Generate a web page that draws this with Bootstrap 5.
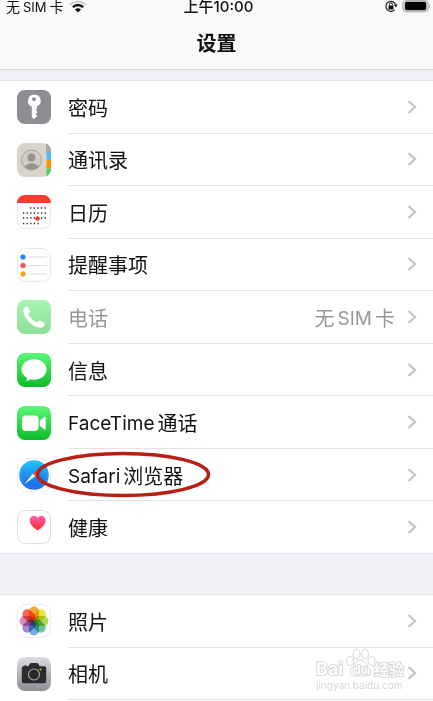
<!DOCTYPE html>
<html lang="zh-CN">
<head>
<meta charset="utf-8">
<meta name="viewport" content="width=device-width, initial-scale=1">
<title>设置</title>
<link href="https://cdn.jsdelivr.net/npm/bootstrap@5.3.0/dist/css/bootstrap.min.css" rel="stylesheet">
<style>
  body { font-family: Inter, "Noto Sans CJK SC", sans-serif; background: #f2f1f6; color: #111; overflow-x: hidden; }
  .topbar { background: #f9f9f8; border-bottom: 1px solid #d6d6d8; height: 70px; }
  .status { height: 14px; font-size: 14px; line-height: 14px; padding: 0 2px 0 6px; }
  .status .latin { font-size: 13px; }
  .status .clock { font-size: 15px; font-weight: 500; }
  .status > div { flex: 1 1 0; }
  .page-title { font-size: 20px; line-height: 24px; font-weight: 700; margin-top: 18px; }
  .settings { background: #fff; border-top: 1px solid #e1e1e4; grid-auto-rows: 1fr; }
  .settings.first { margin-top: 10px; min-height: 474px; }
  .settings.second { margin-top: 40px; min-height: 107px; padding-bottom: 1px; }
  .entry { color: #111; text-decoration: none; padding-left: 17px; gap: 17px; font-size: 20px; line-height: 28px; }
  .entry .tile { width: 34px; height: 34px; flex: none; }
  .entry .line { border-bottom: 1px solid #e1e1e4; padding-right: 16px; }
  .entry .line > span { padding-top: 4px; }
  .entry .latin { font-size: 19px; }
  .settings.first > :last-child { border-bottom: 1px solid #e1e1e4; }
  .settings.first > :last-child .line { border-bottom: 0; }
  .entry.off { color: #97979b; }
  .entry.off .tile { opacity: .55; }
  .mix { gap: 3px; }
  .petals rect { mix-blend-mode: multiply; }
  .chev { width: 10px; height: 16px; flex: none; margin-left: 12px; }
  .ring { position: absolute; left: 36px; top: 2px; width: 176px; height: 47px; pointer-events: none; }
  .brand { position: absolute; right: 24px; top: 0; width: 96px; height: 48px; pointer-events: none; }
</style>
<script src="https://cdn.jsdelivr.net/npm/bootstrap@5.3.0/dist/js/bootstrap.bundle.min.js"></script>
</head>
<body>
<svg width="0" height="0" class="position-absolute" aria-hidden="true">
  <defs>
    <linearGradient id="green" x1="0" y1="0" x2="0" y2="1"><stop offset="0" stop-color="#5df777"/><stop offset="1" stop-color="#0abc29"/></linearGradient>
    <linearGradient id="call" x1="0" y1="0" x2="0" y2="1"><stop offset="0" stop-color="#62ec78"/><stop offset="1" stop-color="#2cc646"/></linearGradient>
    <linearGradient id="blue" x1="0" y1="0" x2="0" y2="1"><stop offset="0" stop-color="#1fc2f8"/><stop offset="1" stop-color="#1b63e4"/></linearGradient>
    <linearGradient id="pink" x1="0" y1="0" x2="0" y2="1"><stop offset="0" stop-color="#ff60b4"/><stop offset="1" stop-color="#ff2b1f"/></linearGradient>
    <linearGradient id="silver" x1="0" y1="0" x2="0" y2="1"><stop offset="0" stop-color="#dcdbe0"/><stop offset="1" stop-color="#8f8e93"/></linearGradient>
    <clipPath id="round"><rect width="34" height="34" rx="8"/></clipPath>
    <symbol id="chevron" viewBox="0 0 10 16"><path d="M1.500 2 8 8l-6.500 6" fill="none" stroke="#c3c3c6" stroke-width="2.200"/></symbol>
  </defs>
</svg>

<header class="topbar">
  <div class="status d-flex align-items-center">
    <div class="d-flex align-items-center">
      <span class="d-flex mix"><span>无</span><span class="latin">SIM</span><span>卡</span></span>
      <svg class="ms-1" width="20" height="14" viewBox="0 0 20 14" aria-label="Wi-Fi"><g fill="none"><path d="M2 4.700Q10-1.800 18 4.700" stroke="#c9c9c9" stroke-width="2"/><path d="M4.800 7.200Q10 2.800 15.200 7.200" stroke="#111" stroke-width="2.400"/></g><path d="M7 9.500Q10 7 13 9.500L10 12.500Z" fill="#111"/></svg>
    </div>
    <span class="clock d-flex"><span>上午</span><span>10:00</span></span>
    <div class="d-flex justify-content-end align-items-center gap-1">
      <svg width="14" height="14" viewBox="0 0 14 14" aria-label="方向锁定"><path d="M11.600 4.500A5 5 0 1 0 10.600 9.800" fill="none" stroke="#222" stroke-width="1.200"/><path d="m9.800 4.500 3.800-.2-1.600 3.100Z" fill="#222"/><rect x="4.500" y="5.500" width="5" height="4" rx=".5" fill="#111"/><path d="M5.500 5.500v-1a1.500 1.500 0 0 1 3 0v1" fill="none" stroke="#111"/></svg>
      <svg width="29" height="14" viewBox="0 0 29 14" aria-label="电池"><rect x="1" y=".5" width="25" height="11" rx="3.500" fill="#fff" stroke="#b3b3b3" stroke-width="1.500"/><rect x="2.800" y="1.800" width="21.500" height="8.500" rx="1.800"/><path d="M27 4q2 2 0 4.500Z" fill="#b3b3b3"/></svg>
    </div>
  </div>
  <h1 class="page-title text-center mb-0">设置</h1>
</header>

<main>
<nav class="settings first d-grid" aria-label="设置">
  <a class="entry d-flex align-items-center" href="#passwords">
    <svg class="tile" viewBox="0 0 34 34"><rect width="34" height="34" rx="8" fill="#8e8d93"/><path fill="#fff" fill-rule="evenodd" d="M17 4.800a6 6 0 0 0-2.200 11.600V27L17 29.300l3.300-3.500-1.800-1.900 2-2-1.700-1.800 1.200-1.300v-2.500A6 6 0 0 0 17 4.800Zm0 2.500a1.900 1.900 0 1 1 0 3.800 1.900 1.900 0 0 1 0-3.800Z"/></svg>
    <span class="line d-flex flex-fill align-items-center h-100"><span class="me-auto">密码</span><svg class="chev"><use href="#chevron"/></svg></span>
  </a>
  <a class="entry d-flex align-items-center" href="#contacts">
    <svg class="tile" viewBox="0 0 34 34"><g clip-path="url(#round)"><rect width="34" height="34" fill="#d8d4ca"/><path d="M29 0h5v9h-5Z" fill="#a9a99b"/><path d="M29.500 9H34v8h-4.500Z" fill="#55b9f3"/><path d="M29.500 17H34v8.500h-4.500Z" fill="#fb9500"/><path d="M29.500 25.500H34V34h-4.500Z" fill="#4bce62"/><circle cx="14.500" cy="17" r="10" fill="#d1cdc3" stroke="#a39f96" stroke-width=".9"/><circle cx="14.500" cy="14.500" r="3.900" fill="#96938b"/><path d="M7.300 24q3-3.700 7.200-3.700T21.700 24q-2.800 2.700-7.200 2.700T7.300 24Z" fill="#96938b"/></g></svg>
    <span class="line d-flex flex-fill align-items-center h-100"><span class="me-auto">通讯录</span><svg class="chev"><use href="#chevron"/></svg></span>
  </a>
  <a class="entry d-flex align-items-center" href="#calendar">
    <svg class="tile" viewBox="0 0 34 34"><rect x=".5" y=".5" width="33" height="33" rx="8" fill="#fff" stroke="#e9e9e9"/><path d="M0 8a8 8 0 0 1 8-8h18a8 8 0 0 1 8 8Z" fill="#f93b30"/><g stroke="#222" stroke-width="1.500" stroke-dasharray="1.300 2.300"><path d="M13 13h16M6 18h23M6 23h23M6 28.500h16"/></g><circle cx="20.500" cy="23.500" r="2.300" fill="#f93b30"/></svg>
    <span class="line d-flex flex-fill align-items-center h-100"><span class="me-auto">日历</span><svg class="chev"><use href="#chevron"/></svg></span>
  </a>
  <a class="entry d-flex align-items-center" href="#reminders">
    <svg class="tile" viewBox="0 0 34 34"><rect x=".5" y=".5" width="33" height="33" rx="8" fill="#fff" stroke="#e9e9e9"/><path d="M12 9h18M12 17.500h18M12 26h18" stroke="#ddd"/><g stroke-width="1" stroke-opacity=".35"><circle cx="6" cy="9" r="2.500" fill="#2189f5" stroke="#2189f5"/><circle cx="6" cy="17.500" r="2.500" fill="#ee5350" stroke="#ee5350"/><circle cx="6" cy="26" r="2.500" fill="#f7a025" stroke="#f7a025"/></g></svg>
    <span class="line d-flex flex-fill align-items-center h-100"><span class="me-auto">提醒事项</span><svg class="chev"><use href="#chevron"/></svg></span>
  </a>
  <a class="entry off d-flex align-items-center" href="#phone">
    <svg class="tile" viewBox="0 0 34 34"><rect width="34" height="34" rx="8" fill="url(#call)"/><path fill="#fff" d="M6.500 9.800C6.800 7.900 8.800 6 10 6.700c1.200 1 2.600 3.400 3 4.600.3 1.200-1.700 2-1.600 3 .6 2.300 5.700 7.300 8.200 8 1.200.2 2-2 3.300-1.700 1.300.4 4 2 4.800 3 .8 1.400-1.300 3.600-3 4-8 1.200-19-9.600-18.200-17.800Z"/></svg>
    <span class="line d-flex flex-fill align-items-center h-100"><span class="me-auto">电话</span><span class="d-flex mix"><span>无</span><span class="latin">SIM</span><span>卡</span></span><svg class="chev"><use href="#chevron"/></svg></span>
  </a>
  <a class="entry d-flex align-items-center" href="#messages">
    <svg class="tile" viewBox="0 0 34 34"><rect width="34" height="34" rx="8" fill="url(#green)"/><path fill="#fff" d="M17 6.300c7 0 12.500 4.400 12.500 10.200S24 26.700 17 26.700q-2 0-3.700-.4c-1.300 1-3 1.800-4.800 1.700 1.200-.9 1.700-1.900 1.600-3.100-3.500-1.800-5.600-4.900-5.600-8.400C4.500 10.700 10 6.300 17 6.300Z"/></svg>
    <span class="line d-flex flex-fill align-items-center h-100"><span class="me-auto">信息</span><svg class="chev"><use href="#chevron"/></svg></span>
  </a>
  <a class="entry d-flex align-items-center" href="#facetime">
    <svg class="tile" viewBox="0 0 34 34"><rect width="34" height="34" rx="8" fill="url(#green)"/><rect x="5" y="9.500" width="16.500" height="15.500" rx="4" fill="#fff"/><path fill="#fff" d="m22.700 15 4.500-4q1.500-1 1.500.8v10.900q0 1.800-1.500.8l-4.500-4Z"/></svg>
    <span class="line d-flex flex-fill align-items-center h-100"><span class="me-auto d-flex mix"><span class="latin">FaceTime</span><span>通话</span></span><svg class="chev"><use href="#chevron"/></svg></span>
  </a>
  <a class="entry d-flex align-items-center position-relative" href="#safari">
    <svg class="tile" viewBox="0 0 34 34"><rect x=".5" y=".5" width="33" height="33" rx="8" fill="#fff" stroke="#ececec"/><circle cx="17" cy="17" r="14.800" fill="url(#blue)"/><circle cx="17" cy="17" r="13" fill="none" stroke="#8fd4fb" stroke-width=".7" stroke-dasharray=".6 1.200"/><path d="m26 8-7.700 10.300-2.600-2.600Z" fill="#f24b3f"/><path d="m7.500 26 8.200-10.300 2.600 2.600Z" fill="#fff"/></svg>
    <span class="line d-flex flex-fill align-items-center h-100"><span class="me-auto d-flex mix"><span class="latin">Safari</span><span>浏览器</span></span><svg class="chev"><use href="#chevron"/></svg></span>
    <svg class="ring" viewBox="0 0 176 47" aria-hidden="true"><ellipse cx="87" cy="23.500" rx="85.500" ry="21" fill="none" stroke="#b71f13" stroke-width="3.500"/></svg>
  </a>
  <a class="entry d-flex align-items-center" href="#health">
    <svg class="tile" viewBox="0 0 34 34"><rect x=".5" y=".5" width="33" height="33" rx="8" fill="#fff" stroke="#dedede"/><path fill="url(#pink)" d="M20.700 20.500c-4.500-3-8-6.300-8-10 0-5 5.700-6.500 8-2.500 2.300-4 8-2.500 8 2.500 0 3.700-3.500 7-8 10Z"/></svg>
    <span class="line d-flex flex-fill align-items-center h-100"><span class="me-auto">健康</span><svg class="chev"><use href="#chevron"/></svg></span>
  </a>
</nav>

<nav class="settings second d-grid" aria-label="照片与相机">
  <a class="entry d-flex align-items-center" href="#photos">
    <svg class="tile" viewBox="0 0 34 34"><rect x=".5" y=".5" width="33" height="33" rx="8" fill="#fff" stroke="#ececec"/><g class="petals"><rect x="12" y="2.500" width="10" height="14.500" rx="5" fill="#fba735"/><rect x="12" y="2.500" width="10" height="14.500" rx="5" fill="#ebe23c" transform="rotate(45 17 17)"/><rect x="12" y="2.500" width="10" height="14.500" rx="5" fill="#b5d957" transform="rotate(90 17 17)"/><rect x="12" y="2.500" width="10" height="14.500" rx="5" fill="#6cc79c" transform="rotate(135 17 17)"/><rect x="12" y="2.500" width="10" height="14.500" rx="5" fill="#74b0e2" transform="rotate(180 17 17)"/><rect x="12" y="2.500" width="10" height="14.500" rx="5" fill="#a08bcd" transform="rotate(225 17 17)"/><rect x="12" y="2.500" width="10" height="14.500" rx="5" fill="#d98cb9" transform="rotate(270 17 17)"/><rect x="12" y="2.500" width="10" height="14.500" rx="5" fill="#f5695a" transform="rotate(315 17 17)"/></g></svg>
    <span class="line d-flex flex-fill align-items-center h-100"><span class="me-auto">照片</span><svg class="chev"><use href="#chevron"/></svg></span>
  </a>
  <a class="entry d-flex align-items-center position-relative" href="#camera">
    <svg class="tile" viewBox="0 0 34 34"><rect width="34" height="34" rx="8" fill="url(#silver)"/><path fill="#2b2b2d" d="M6.500 9.300q0-.8.800-.8h1.900q.8 0 .8.800h1.300l1.500-2.500q.6-.8 1.500-.8h5.400q.9 0 1.500.8L22.700 9.300h4.500q2 0 2 2v13q0 2-2 2H6.800q-2 0-2-2v-13q0-1.900 1.700-2Z"/><circle cx="17" cy="17.500" r="5.500" fill="#29292b" stroke="#a5a5a8" stroke-width="1.200"/><circle cx="23.500" cy="12.500" r="1" fill="#f5bd20"/></svg>
    <span class="line d-flex flex-fill align-items-center h-100"><span class="me-auto">相机</span><svg class="chev"><use href="#chevron"/></svg></span>
    <svg class="brand" viewBox="0 0 96 48" aria-hidden="true"><g fill="#fff" stroke="#d6d6d6" stroke-width="1"><ellipse cx="37" cy="13" rx="3.500" ry="4.500"/><ellipse cx="43.500" cy="6" rx="3.500" ry="4.800"/><ellipse cx="52" cy="6" rx="3.500" ry="4.800"/><ellipse cx="58.500" cy="13" rx="3.500" ry="4.500"/><path d="M47.500 12c4 0 4.500 4 8 7 4 4 2.500 9-2.500 9H42c-5 0-6.500-5-2.500-9 3.500-3 4-7 8-7Z"/></g><g font-weight="700" fill="#fff" stroke="#d2d2d2" stroke-width="1.600" paint-order="stroke"><text x="3" y="27" font-size="18">Bai</text><text x="40" y="26" font-size="12">du</text><text x="61" y="27" font-size="15">经验</text></g><text x="3" y="41" font-size="10" fill="#d6d6d6">jingyan.baidu.com</text></svg>
  </a>
</nav>
</main>
</body>
</html>
